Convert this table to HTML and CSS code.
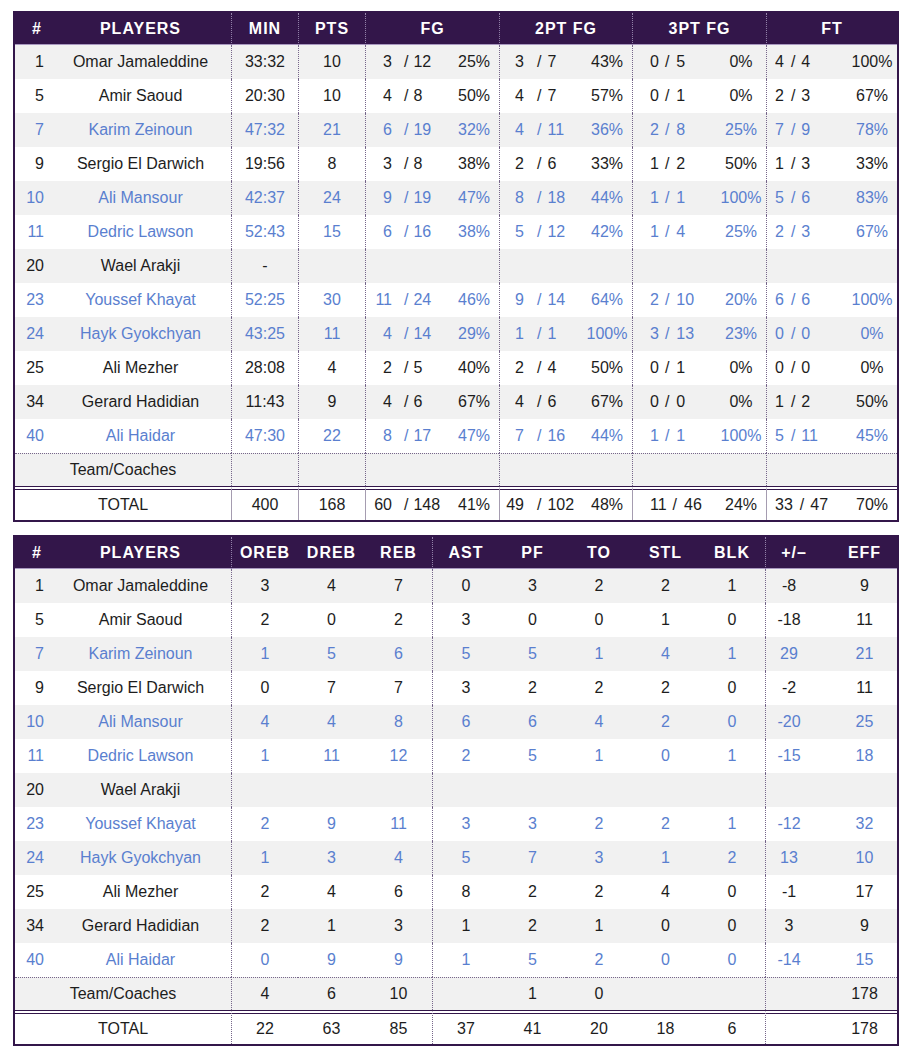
FILE: index.html
```html
<!DOCTYPE html>
<html lang="en">
<head>
<meta charset="utf-8">
<title>Box Score</title>
<link rel="stylesheet" href="styles.css">
</head>
<body>
<table class="box shoot">
  <colgroup>
    <col class="c-num"><col class="c-name"><col class="c-s"><col class="c-s"><col class="c-g1"><col class="c-g2"><col class="c-g3"><col class="c-g4">
  </colgroup>
  <thead>
    <tr><th class="num">#</th><th>PLAYERS</th><th class="gs">MIN</th><th class="gs">PTS</th><th class="gs">FG</th><th class="gs">2PT FG</th><th class="gs">3PT FG</th><th class="gs">FT</th></tr>
  </thead>
  <tbody>
    <tr><td class="num">1</td><td>Omar Jamaleddine</td><td class="gs">33:32</td><td class="gs">10</td>
      <td class="gs g1"><div class="sc"><span class="m">3</span><span class="s">/</span><span class="a">12</span><span class="p">25%</span></div></td>
      <td class="gs g2"><div class="sc"><span class="m">3</span><span class="s">/</span><span class="a">7</span><span class="p">43%</span></div></td>
      <td class="gs g3"><div class="sc"><span class="m">0</span><span class="s">/</span><span class="a">5</span><span class="p">0%</span></div></td>
      <td class="gs g4"><div class="sc"><span class="m">4</span><span class="s">/</span><span class="a">4</span><span class="p">100%</span></div></td></tr>
    <tr><td class="num">5</td><td>Amir Saoud</td><td class="gs">20:30</td><td class="gs">10</td>
      <td class="gs g1"><div class="sc"><span class="m">4</span><span class="s">/</span><span class="a">8</span><span class="p">50%</span></div></td>
      <td class="gs g2"><div class="sc"><span class="m">4</span><span class="s">/</span><span class="a">7</span><span class="p">57%</span></div></td>
      <td class="gs g3"><div class="sc"><span class="m">0</span><span class="s">/</span><span class="a">1</span><span class="p">0%</span></div></td>
      <td class="gs g4"><div class="sc"><span class="m">2</span><span class="s">/</span><span class="a">3</span><span class="p">67%</span></div></td></tr>
    <tr class="blue"><td class="num">7</td><td>Karim Zeinoun</td><td class="gs">47:32</td><td class="gs">21</td>
      <td class="gs g1"><div class="sc"><span class="m">6</span><span class="s">/</span><span class="a">19</span><span class="p">32%</span></div></td>
      <td class="gs g2"><div class="sc"><span class="m">4</span><span class="s">/</span><span class="a">11</span><span class="p">36%</span></div></td>
      <td class="gs g3"><div class="sc"><span class="m">2</span><span class="s">/</span><span class="a">8</span><span class="p">25%</span></div></td>
      <td class="gs g4"><div class="sc"><span class="m">7</span><span class="s">/</span><span class="a">9</span><span class="p">78%</span></div></td></tr>
    <tr><td class="num">9</td><td>Sergio El Darwich</td><td class="gs">19:56</td><td class="gs">8</td>
      <td class="gs g1"><div class="sc"><span class="m">3</span><span class="s">/</span><span class="a">8</span><span class="p">38%</span></div></td>
      <td class="gs g2"><div class="sc"><span class="m">2</span><span class="s">/</span><span class="a">6</span><span class="p">33%</span></div></td>
      <td class="gs g3"><div class="sc"><span class="m">1</span><span class="s">/</span><span class="a">2</span><span class="p">50%</span></div></td>
      <td class="gs g4"><div class="sc"><span class="m">1</span><span class="s">/</span><span class="a">3</span><span class="p">33%</span></div></td></tr>
    <tr class="blue"><td class="num">10</td><td>Ali Mansour</td><td class="gs">42:37</td><td class="gs">24</td>
      <td class="gs g1"><div class="sc"><span class="m">9</span><span class="s">/</span><span class="a">19</span><span class="p">47%</span></div></td>
      <td class="gs g2"><div class="sc"><span class="m">8</span><span class="s">/</span><span class="a">18</span><span class="p">44%</span></div></td>
      <td class="gs g3"><div class="sc"><span class="m">1</span><span class="s">/</span><span class="a">1</span><span class="p">100%</span></div></td>
      <td class="gs g4"><div class="sc"><span class="m">5</span><span class="s">/</span><span class="a">6</span><span class="p">83%</span></div></td></tr>
    <tr class="blue"><td class="num">11</td><td>Dedric Lawson</td><td class="gs">52:43</td><td class="gs">15</td>
      <td class="gs g1"><div class="sc"><span class="m">6</span><span class="s">/</span><span class="a">16</span><span class="p">38%</span></div></td>
      <td class="gs g2"><div class="sc"><span class="m">5</span><span class="s">/</span><span class="a">12</span><span class="p">42%</span></div></td>
      <td class="gs g3"><div class="sc"><span class="m">1</span><span class="s">/</span><span class="a">4</span><span class="p">25%</span></div></td>
      <td class="gs g4"><div class="sc"><span class="m">2</span><span class="s">/</span><span class="a">3</span><span class="p">67%</span></div></td></tr>
    <tr><td class="num">20</td><td>Wael Arakji</td><td class="gs">-</td><td class="gs"></td>
      <td class="gs g1"></td><td class="gs g2"></td><td class="gs g3"></td><td class="gs g4"></td></tr>
    <tr class="blue"><td class="num">23</td><td>Youssef Khayat</td><td class="gs">52:25</td><td class="gs">30</td>
      <td class="gs g1"><div class="sc"><span class="m">11</span><span class="s">/</span><span class="a">24</span><span class="p">46%</span></div></td>
      <td class="gs g2"><div class="sc"><span class="m">9</span><span class="s">/</span><span class="a">14</span><span class="p">64%</span></div></td>
      <td class="gs g3"><div class="sc"><span class="m">2</span><span class="s">/</span><span class="a">10</span><span class="p">20%</span></div></td>
      <td class="gs g4"><div class="sc"><span class="m">6</span><span class="s">/</span><span class="a">6</span><span class="p">100%</span></div></td></tr>
    <tr class="blue"><td class="num">24</td><td>Hayk Gyokchyan</td><td class="gs">43:25</td><td class="gs">11</td>
      <td class="gs g1"><div class="sc"><span class="m">4</span><span class="s">/</span><span class="a">14</span><span class="p">29%</span></div></td>
      <td class="gs g2"><div class="sc"><span class="m">1</span><span class="s">/</span><span class="a">1</span><span class="p">100%</span></div></td>
      <td class="gs g3"><div class="sc"><span class="m">3</span><span class="s">/</span><span class="a">13</span><span class="p">23%</span></div></td>
      <td class="gs g4"><div class="sc"><span class="m">0</span><span class="s">/</span><span class="a">0</span><span class="p">0%</span></div></td></tr>
    <tr><td class="num">25</td><td>Ali Mezher</td><td class="gs">28:08</td><td class="gs">4</td>
      <td class="gs g1"><div class="sc"><span class="m">2</span><span class="s">/</span><span class="a">5</span><span class="p">40%</span></div></td>
      <td class="gs g2"><div class="sc"><span class="m">2</span><span class="s">/</span><span class="a">4</span><span class="p">50%</span></div></td>
      <td class="gs g3"><div class="sc"><span class="m">0</span><span class="s">/</span><span class="a">1</span><span class="p">0%</span></div></td>
      <td class="gs g4"><div class="sc"><span class="m">0</span><span class="s">/</span><span class="a">0</span><span class="p">0%</span></div></td></tr>
    <tr><td class="num">34</td><td>Gerard Hadidian</td><td class="gs">11:43</td><td class="gs">9</td>
      <td class="gs g1"><div class="sc"><span class="m">4</span><span class="s">/</span><span class="a">6</span><span class="p">67%</span></div></td>
      <td class="gs g2"><div class="sc"><span class="m">4</span><span class="s">/</span><span class="a">6</span><span class="p">67%</span></div></td>
      <td class="gs g3"><div class="sc"><span class="m">0</span><span class="s">/</span><span class="a">0</span><span class="p">0%</span></div></td>
      <td class="gs g4"><div class="sc"><span class="m">1</span><span class="s">/</span><span class="a">2</span><span class="p">50%</span></div></td></tr>
    <tr class="blue"><td class="num">40</td><td>Ali Haidar</td><td class="gs">47:30</td><td class="gs">22</td>
      <td class="gs g1"><div class="sc"><span class="m">8</span><span class="s">/</span><span class="a">17</span><span class="p">47%</span></div></td>
      <td class="gs g2"><div class="sc"><span class="m">7</span><span class="s">/</span><span class="a">16</span><span class="p">44%</span></div></td>
      <td class="gs g3"><div class="sc"><span class="m">1</span><span class="s">/</span><span class="a">1</span><span class="p">100%</span></div></td>
      <td class="gs g4"><div class="sc"><span class="m">5</span><span class="s">/</span><span class="a">11</span><span class="p">45%</span></div></td></tr>
    <tr class="team"><td colspan="2">Team/Coaches</td><td class="gs"></td><td class="gs"></td>
      <td class="gs"></td><td class="gs"></td><td class="gs"></td><td class="gs"></td></tr>
    <tr class="total"><td colspan="2">TOTAL</td><td class="gs">400</td><td class="gs">168</td>
      <td class="gs g1"><div class="sc"><span class="m">60</span><span class="s">/</span><span class="a">148</span><span class="p">41%</span></div></td>
      <td class="gs g2"><div class="sc"><span class="m">49</span><span class="s">/</span><span class="a">102</span><span class="p">48%</span></div></td>
      <td class="gs g3"><div class="sc"><span class="m">11</span><span class="s">/</span><span class="a">46</span><span class="p">24%</span></div></td>
      <td class="gs g4"><div class="sc"><span class="m">33</span><span class="s">/</span><span class="a">47</span><span class="p">70%</span></div></td></tr>
  </tbody>
</table>

<table class="box misc">
  <colgroup>
    <col class="c-num"><col class="c-name"><col class="c-s"><col class="c-s"><col class="c-s"><col class="c-s"><col class="c-s"><col class="c-t"><col class="c-s"><col class="c-t"><col class="c-s"><col class="c-e">
  </colgroup>
  <thead>
    <tr><th class="num">#</th><th>PLAYERS</th><th class="gs">OREB</th><th>DREB</th><th>REB</th><th class="gs">AST</th><th>PF</th><th>TO</th><th>STL</th><th>BLK</th><th class="gs pm">+/&#8211;</th><th>EFF</th></tr>
  </thead>
  <tbody>
    <tr><td class="num">1</td><td>Omar Jamaleddine</td><td class="gs">3</td><td>4</td><td>7</td><td class="gs">0</td><td>3</td><td>2</td><td>2</td><td>1</td><td class="gs pm">-8</td><td>9</td></tr>
    <tr><td class="num">5</td><td>Amir Saoud</td><td class="gs">2</td><td>0</td><td>2</td><td class="gs">3</td><td>0</td><td>0</td><td>1</td><td>0</td><td class="gs pm">-18</td><td>11</td></tr>
    <tr class="blue"><td class="num">7</td><td>Karim Zeinoun</td><td class="gs">1</td><td>5</td><td>6</td><td class="gs">5</td><td>5</td><td>1</td><td>4</td><td>1</td><td class="gs pm">29</td><td>21</td></tr>
    <tr><td class="num">9</td><td>Sergio El Darwich</td><td class="gs">0</td><td>7</td><td>7</td><td class="gs">3</td><td>2</td><td>2</td><td>2</td><td>0</td><td class="gs pm">-2</td><td>11</td></tr>
    <tr class="blue"><td class="num">10</td><td>Ali Mansour</td><td class="gs">4</td><td>4</td><td>8</td><td class="gs">6</td><td>6</td><td>4</td><td>2</td><td>0</td><td class="gs pm">-20</td><td>25</td></tr>
    <tr class="blue"><td class="num">11</td><td>Dedric Lawson</td><td class="gs">1</td><td>11</td><td>12</td><td class="gs">2</td><td>5</td><td>1</td><td>0</td><td>1</td><td class="gs pm">-15</td><td>18</td></tr>
    <tr><td class="num">20</td><td>Wael Arakji</td><td class="gs"></td><td></td><td></td><td class="gs"></td><td></td><td></td><td></td><td></td><td class="gs pm"></td><td></td></tr>
    <tr class="blue"><td class="num">23</td><td>Youssef Khayat</td><td class="gs">2</td><td>9</td><td>11</td><td class="gs">3</td><td>3</td><td>2</td><td>2</td><td>1</td><td class="gs pm">-12</td><td>32</td></tr>
    <tr class="blue"><td class="num">24</td><td>Hayk Gyokchyan</td><td class="gs">1</td><td>3</td><td>4</td><td class="gs">5</td><td>7</td><td>3</td><td>1</td><td>2</td><td class="gs pm">13</td><td>10</td></tr>
    <tr><td class="num">25</td><td>Ali Mezher</td><td class="gs">2</td><td>4</td><td>6</td><td class="gs">8</td><td>2</td><td>2</td><td>4</td><td>0</td><td class="gs pm">-1</td><td>17</td></tr>
    <tr><td class="num">34</td><td>Gerard Hadidian</td><td class="gs">2</td><td>1</td><td>3</td><td class="gs">1</td><td>2</td><td>1</td><td>0</td><td>0</td><td class="gs pm">3</td><td>9</td></tr>
    <tr class="blue"><td class="num">40</td><td>Ali Haidar</td><td class="gs">0</td><td>9</td><td>9</td><td class="gs">1</td><td>5</td><td>2</td><td>0</td><td>0</td><td class="gs pm">-14</td><td>15</td></tr>
    <tr class="team"><td colspan="2">Team/Coaches</td><td class="gs">4</td><td>6</td><td>10</td><td class="gs"></td><td>1</td><td>0</td><td></td><td></td><td class="gs pm"></td><td>178</td></tr>
    <tr class="total"><td colspan="2">TOTAL</td><td class="gs">22</td><td>63</td><td>85</td><td class="gs">37</td><td>41</td><td>20</td><td>18</td><td>6</td><td class="gs pm"></td><td>178</td></tr>
  </tbody>
</table>
</body>
</html>
```

FILE: styles.css
```css
* { box-sizing: border-box; }

body {
  margin: 0;
  padding: 11px 0 0 13px;
  background: #ffffff;
  font-family: "Liberation Sans", Arial, sans-serif;
  font-size: 16px;
  color: #1d1d1d;
}

.box {
  width: 886px;
  table-layout: fixed;
  border-collapse: separate;
  border-spacing: 0;
  border: 2px solid #33164a;
}

.box + .box { margin-top: 13px; }

.c-num { width: 35px; }
.c-name { width: 181px; }
.c-s { width: 67px; }
.c-t { width: 66px; }
.c-e { width: 65px; }
.c-g1 { width: 134px; }
.c-g2 { width: 133px; }
.c-g3 { width: 134px; }
.c-g4 { width: 131px; }

th {
  height: 32px;
  padding: 1px 0 0;
  background: #33164a;
  color: #ffffff;
  font-weight: bold;
  letter-spacing: 1px;
  text-align: center;
  white-space: nowrap;
  border-bottom: 1px solid #a898bf;
}

th.gs { border-left: 1px dotted #9484aa; }
th.num { text-align: right; padding-right: 8px; }
th.pm { padding-right: 10px; }

td {
  height: 34px;
  padding: 0;
  text-align: center;
  white-space: nowrap;
  background: #ffffff;
}

td.gs { border-left: 1px dotted #76668a; }
td.num { text-align: right; padding-right: 6px; }
td.pm { padding-right: 20px; }

tbody tr:nth-child(odd) td { background: #f1f1f1; }

tr.blue td { color: #5a7fcf; }

tr.team td {
  height: 33px;
  border-top: 1px dotted #76668a;
}

tr.total td {
  height: 34px;
  background: #ffffff;
  border-top: 4px double #33164a;
}

.shoot tr.total td.gs { border-left: 1px solid #a59cb0; }

/* shooting cells: made / attempts + percentage */
.sc {
  display: flex;
  align-items: center;
}

.sc .p {
  width: 50px;
  margin-left: auto;
  text-align: center;
}

.g1 .m { width: 26px; text-align: right; }
.g1 .s { margin-left: 12px; }
.g1 .a { margin-left: 5px; }

.g2 .m { width: 24px; text-align: right; }
.g2 .s { margin-left: 13px; }
.g2 .a { margin-left: 6px; }

.g3 .m { margin-left: 17px; }
.g3 .s { margin-left: 6px; }
.g3 .a { margin-left: 7px; }

.g4 .m { margin-left: 8px; }
.g4 .s { margin-left: 7px; }
.g4 .a { margin-left: 6px; }
```
